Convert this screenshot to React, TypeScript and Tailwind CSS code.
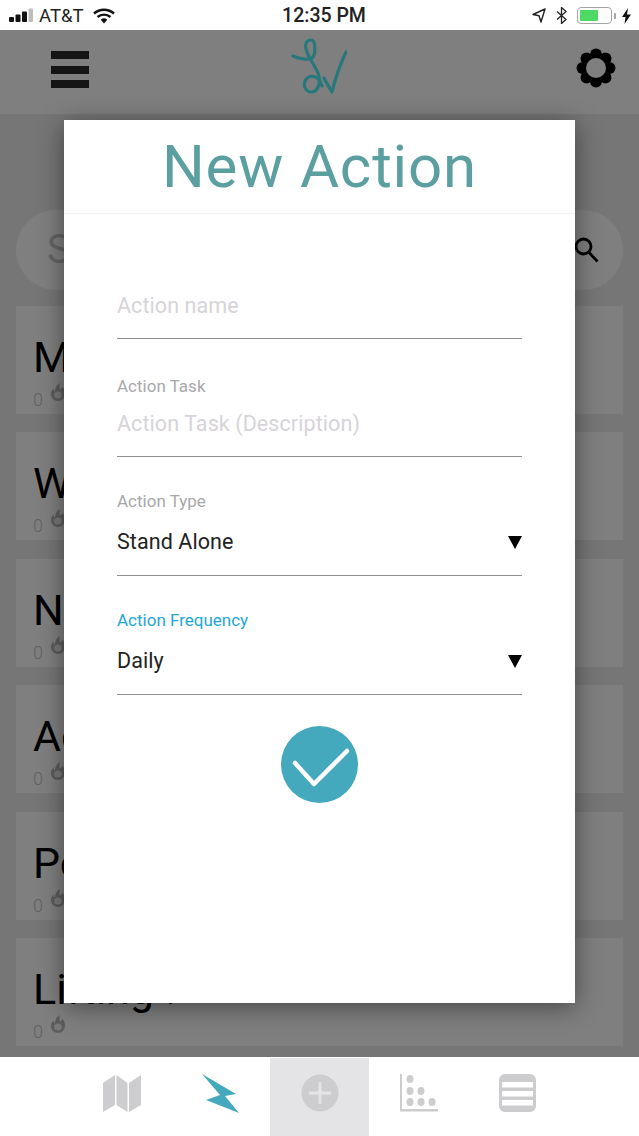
import React from "react";

const Flame = () => (
  <svg width="16" height="20" viewBox="0 0 16 20" fill="none">
    <path d="M9.500 1c.5 2.500-.5 4 .5 6.500 1.500-.5 2-1.500 2-3 2 2 3 4.500 3 7C15 15.500 12 19 8 19s-7-3-7-7c0-2.500 1-4 2.500-5.500 0 1.500.5 2.500 1.500 3C5 6 6.500 3 9.500 1z" fill="#b9b8ba" />
    <ellipse cx="8" cy="13" rx="3.800" ry="3.500" fill="#f2f2f2" />
  </svg>
);

const Card = ({ title }: { title: string }) => (
  <div className="h-[108px] bg-white pl-[17px] flex flex-col overflow-hidden">
    <div className="h-[77px] pt-[25px] text-[43px] leading-[52px] text-black whitespace-nowrap">{title}</div>
    <div className="flex items-start gap-[7px] text-[18px] leading-[20px] text-[#c4c3c5] font-light mt-[7px]">
      <span>0</span>
      <span className="-mt-[8px]"><Flame /></span>
    </div>
  </div>
);

const Field = ({ label, labelColor, labelGap, value, placeholder, height }: { label?: string; labelColor?: string; labelGap?: string; value?: string; placeholder?: string; height: string }) => (
  <div className={`flex flex-col justify-end ${height}`}>
    {label && <div className={`text-[17px] leading-[20px] ${labelGap} ${labelColor}`}>{label}</div>}
    <div className={`h-[35px] flex items-start justify-between text-[21.500px] leading-[30px] border-b border-[#8f8f90] pb-[12px] box-content ${value ? "text-[#222222]" : "text-[#d6d4d9]"}`}>
      <span className={`tracking-[0.08px] ${value ? "-mt-[1px]" : ""}`}>{value ?? placeholder}</span>
      {value && (
        <svg width="14" height="13" viewBox="0 0 14 13" className="mt-[8px]"><path d="M0 0h14L7 13z" fill="#000" /></svg>
      )}
    </div>
  </div>
);

const TabCell = ({ active, children }: { active?: boolean; children: React.ReactNode }) => (
  <div className={`w-[99px] flex justify-center pt-[16px] ${active ? "bg-[#e4e3e6]" : ""}`}>{children}</div>
);

export default function App() {
  return (
    <div className="relative w-[639px] h-[1136px] overflow-hidden bg-[#ededed] flex flex-col" style={{ fontFamily: "Roboto, sans-serif" }}>
      {/* status bar */}
      <div className="h-[30px] bg-white relative z-30 flex items-center justify-between pl-[9px] pr-[8px] pt-[1px] shrink-0">
        <div className="flex items-center w-[208px]">
          <svg width="25" height="15" viewBox="0 0 25 15">
            <rect x="0" y="9" width="5" height="5" rx="1" fill="#111" />
            <rect x="6.500" y="6.500" width="5" height="7.500" rx="1" fill="#111" />
            <rect x="13" y="3.500" width="5" height="10.500" rx="1" fill="#111" />
            <rect x="19.500" y="0.500" width="4.500" height="13.500" rx="1" fill="#bdbdbd" />
          </svg>
          <span className="ml-[5px] text-[18.500px] leading-[20px] text-[#222]">AT&amp;T</span>
          <svg width="22" height="16" viewBox="0 0 22 16" className="ml-[9px]">
            <path d="M11 15.500 7.700 11.700a5 5 0 0 1 6.600 0z" fill="#111" />
            <path d="M1 5.500a15 15 0 0 1 20 0" stroke="#111" strokeWidth="2.400" fill="none" />
            <path d="M4.500 9a10 10 0 0 1 13 0" stroke="#111" strokeWidth="2.400" fill="none" />
          </svg>
        </div>
        <span className="text-[19.500px] leading-[20px] text-[#222] font-medium">12:35 PM</span>
        <div className="flex items-center justify-end w-[200px]">
          <svg width="14" height="15" viewBox="0 0 14 15" fill="none">
            <path d="M13 1 1 6.500l6 1.200L9 14z" stroke="#222" strokeWidth="1.400" strokeLinejoin="round" />
          </svg>
          <svg width="11" height="17" viewBox="0 0 11 17" fill="none" className="ml-[10px]">
            <path d="m1 4.500 9 8-4.500 4V.5L10 4.500l-9 8" stroke="#222" strokeWidth="1.300" />
          </svg>
          <div className="ml-[10px] w-[35px] h-[17px] rounded-[4px] border border-[#a5a5a5] p-[2px]">
            <div className="h-full w-[18px] bg-[#4cd964] rounded-[1px]" />
          </div>
          <div className="w-[2px] h-[6px] bg-[#a5a5a5] ml-[2px] rounded-r-[1px]" />
          <svg width="9" height="16" viewBox="0 0 9 16" className="ml-[6px]">
            <path d="M6 0 0 9h3.500L2.500 16 9 6.500H5z" fill="#111" />
          </svg>
        </div>
      </div>

      {/* header */}
      <div className="h-[84px] bg-white shrink-0 flex items-start justify-between relative">
        <div className="ml-[51px] mt-[21px] w-[38px] flex flex-col gap-[6.500px]">
          <div className="h-[8px] bg-[#2a2a2a]" />
          <div className="h-[8px] bg-[#2a2a2a]" />
          <div className="h-[8px] bg-[#2a2a2a]" />
        </div>
        <svg width="56" height="58" viewBox="0 0 56 58" fill="none" className="mt-[7px] -ml-[27px]">
          <path d="M2 19c6 3 14 4 19 2 4-3 4-18-1-18-5 0-6 5-5 9 2 8 8 15 12 24 3 8 1 19-7 19-5 0-8-6-6-11 2-5 8-6 12-3 3 2 4 5 5 8" stroke="#4ef0f4" strokeWidth="3.200" strokeLinecap="round" />
          <path d="M33 41c2 4 5 9 8 14 3-13 8-27 14-40" stroke="#4ef0f4" strokeWidth="3.200" strokeLinecap="round" strokeLinejoin="round" />
        </svg>
        <svg width="40" height="40" viewBox="0 0 40 40" className="mr-[23px] mt-[18px]">
          <g fill="#000">
            <circle cx="20" cy="20" r="15" />
            <circle cx="20" cy="6.500" r="6" />
            <circle cx="20" cy="33.500" r="6" />
            <circle cx="6.500" cy="20" r="6" />
            <circle cx="33.500" cy="20" r="6" />
            <circle cx="10.500" cy="10.500" r="6" />
            <circle cx="29.500" cy="10.500" r="6" />
            <circle cx="10.500" cy="29.500" r="6" />
            <circle cx="29.500" cy="29.500" r="6" />
          </g>
          <circle cx="20" cy="20" r="10" fill="#fff" />
        </svg>
      </div>

      {/* page beneath the dialog */}
      <div className="flex-1 px-[16px] flex flex-col">
        <div className="mt-[96px] h-[80px] rounded-[40px] bg-white flex items-center justify-between pl-[31px] pr-[24px] shrink-0">
          <span className="text-[40px] text-[#c9c8ca]">S</span>
          <svg width="25" height="26" viewBox="0 0 25 26" fill="none">
            <circle cx="9.500" cy="9.500" r="7.500" stroke="#000" strokeWidth="2.800" />
            <path d="m15 15.500 8.500 9" stroke="#000" strokeWidth="2.800" />
          </svg>
        </div>
        <div className="mt-[16px] flex flex-col gap-[18.400px]">
          <Card title="M" />
          <Card title="W" />
          <Card title="N" />
          <Card title="Ac" />
          <Card title="Po" />
          <Card title="Lifting !" />
        </div>
      </div>

      {/* tab bar */}
      <div className="h-[79px] bg-white shrink-0 relative z-30 flex justify-center pt-[1px]">
        <TabCell>
          <svg width="38" height="39" viewBox="0 0 38 39" fill="#cdccce">
            <path d="M0 9 12 1v30L0 38z" />
            <path d="M13.500 1 24.500 9v29L13.500 31z" />
            <path d="M26 9 38 1v30L26 38z" />
          </svg>
        </TabCell>
        <TabCell>
          <svg width="38" height="39" viewBox="0 0 38 39" fill="#44a9bc">
            <path d="M0 0 34 20 23 22 37 39 4 26 18 21z" />
          </svg>
        </TabCell>
        <TabCell active>
          <svg width="38" height="38" viewBox="0 0 38 38">
            <circle cx="19" cy="19" r="18.500" fill="#cdccce" />
            <path d="M19 8v22M8 19h22" stroke="#e4e3e6" strokeWidth="3" />
          </svg>
        </TabCell>
        <TabCell>
          <svg width="38" height="38" viewBox="0 0 38 38" fill="#cdccce">
            <path d="M0 0h2v35h36v2.500H0z" />
            <ellipse cx="10" cy="5" rx="3.500" ry="4" />
            <ellipse cx="10" cy="17" rx="3.500" ry="4" />
            <ellipse cx="21" cy="17" rx="3.500" ry="4" />
            <ellipse cx="10" cy="28" rx="3.500" ry="4" />
            <ellipse cx="21" cy="28" rx="3.500" ry="4" />
            <ellipse cx="32" cy="28" rx="3.500" ry="4" />
          </svg>
        </TabCell>
        <TabCell>
          <svg width="37" height="38" viewBox="0 0 37 38">
            <rect width="37" height="38" rx="6" fill="#cdccce" />
            <rect x="3" y="8" width="31" height="5.500" fill="#fff" />
            <rect x="3" y="17" width="31" height="5.500" fill="#fff" />
            <rect x="3" y="26" width="31" height="5.500" fill="#fff" />
          </svg>
        </TabCell>
      </div>

      {/* dimming layer */}
      <div className="absolute left-0 right-0 top-[30px] h-[1027px] bg-black/50 z-10" />

      {/* dialog */}
      <div className="absolute z-20 left-[64px] top-[120px] w-[511px] h-[883px] bg-white shadow-[0_4px_24px_rgba(0,0,0,0.45)] flex flex-col">
        <div className="h-[94px] border-b border-[#f3f2f4] flex items-center justify-center shrink-0">
          <span className="text-[60px] leading-[70px] text-[#5b9fa1] tracking-[0.85px]">New Action</span>
        </div>
        <div className="px-[53px] flex flex-col">
          <Field height="h-[125px]" placeholder="Action name" />
          <Field height="h-[118px]" label="Action Task" labelGap="mb-[13px]" labelColor="text-[#a9a8aa]" placeholder="Action Task (Description)" />
          <Field height="h-[119px]" label="Action Type" labelGap="mb-[17px]" labelColor="text-[#a9a8aa]" value="Stand Alone" />
          <Field height="h-[119px]" label="Action Frequency" labelGap="mb-[17px]" labelColor="text-[#1fa6d8]" value="Daily" />
          <svg width="77" height="77" viewBox="0 0 77 77" fill="none" className="mt-[31px] self-center">
            <circle cx="38.500" cy="38.500" r="38.500" fill="#44a9bc" />
            <path d="M14 37 33 58 66 25" stroke="#fff" strokeWidth="4.500" strokeLinecap="round" strokeLinejoin="round" />
          </svg>
        </div>
      </div>
    </div>
  );
}
